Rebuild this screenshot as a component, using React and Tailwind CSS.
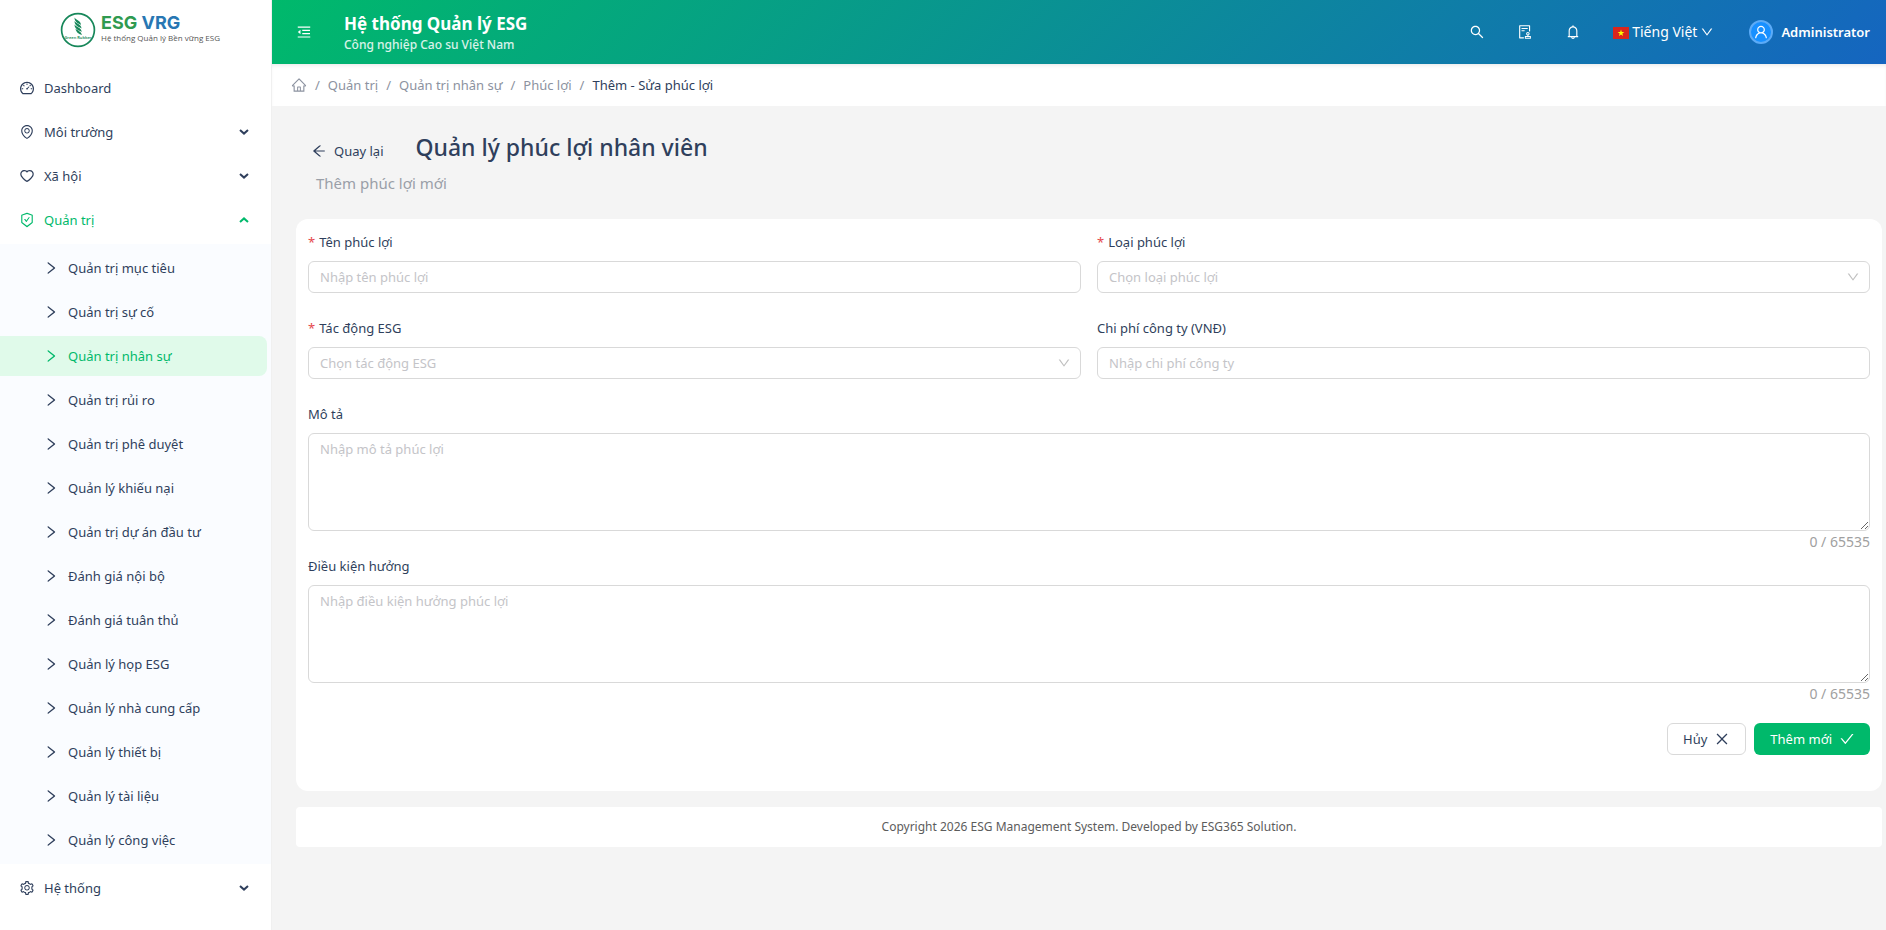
import {
  AiOutlineArrowLeft,
  AiOutlineAudit,
  AiOutlineBell,
  AiOutlineCheck,
  AiOutlineClose,
  AiOutlineDashboard,
  AiOutlineDown,
  AiOutlineEnvironment,
  AiOutlineHeart,
  AiOutlineHome,
  AiOutlineMenuFold,
  AiOutlineRight,
  AiOutlineSafetyCertificate,
  AiOutlineSearch,
  AiOutlineSetting,
  AiOutlineUser,
} from 'react-icons/ai'

const governanceItems = [
  'Quản trị mục tiêu',
  'Quản trị sự cố',
  'Quản trị nhân sự',
  'Quản trị rủi ro',
  'Quản trị phê duyệt',
  'Quản lý khiếu nại',
  'Quản trị dự án đầu tư',
  'Đánh giá nội bộ',
  'Đánh giá tuân thủ',
  'Quản lý họp ESG',
  'Quản lý nhà cung cấp',
  'Quản lý thiết bị',
  'Quản lý tài liệu',
  'Quản lý công việc',
]

const activeItem = 'Quản trị nhân sự'

function Caret({ open }) {
  return (
    <svg viewBox="0 0 10 6" className={`h-[6px] w-[10px] ${open ? 'rotate-180' : ''}`} fill="none">
      <path d="M1 1L5 4.600L9 1" stroke="currentColor" strokeWidth="2" />
    </svg>
  )
}

function Logo() {
  return (
    <a href="#home" className="flex h-16 items-start gap-[5px] pt-3 pl-[60px]">
      <svg viewBox="0 0 36 36" className="h-[36px] w-[36px] shrink-0" fill="none">
        <circle cx="18" cy="18" r="16.4" stroke="#17875a" strokeWidth="1.7" />
        <g fill="#17875a">
          <path d="M14.500 5.500c1 2.200 6.500 3.200 6.500 7.500-2.500-1.800-6.500-2.500-6.500-7.500z" />
          <path d="M14.500 9c1 2.200 7 3.200 7 7.500-2.500-1.800-7-2.500-7-7.500z" />
          <path d="M14.500 12.500c1 2.200 7.200 3.200 7.200 7.500-2.500-1.800-7.200-2.500-7.200-7.500z" />
          <path d="M15.500 16.500c1.500 2 5.500 2.400 6.500 6.500-3-1-6-2.500-6.500-6.500z" />
        </g>
        <text x="18" y="27" textAnchor="middle" fontSize="4" fontWeight="600" fill="#17875a">
          Green Rubber
        </text>
      </svg>
      <span className="flex flex-col whitespace-nowrap">
        <span className="font-['Inter',sans-serif] text-[18px] leading-[21px] font-bold">
          <span className="text-[#2f9a50]">ESG </span>
          <span className="text-[#2877b3]">VRG</span>
        </span>
        <span className="font-['Open_Sans',sans-serif] text-[8px] leading-[10px] text-[#555]">
          Hệ thống Quản lý Bền vững ESG
        </span>
      </span>
    </a>
  )
}

function MenuGroup({ icon: Icon, label, open, plain }) {
  return (
    <button
      type="button"
      className={`flex h-10 w-full items-center pr-[22px] pl-[19px] text-left ${open ? 'text-[#00b96b]' : ''}`}
    >
      <Icon className="h-4 w-4" />
      <span className="ml-[9px] flex-1">{label}</span>
      {!plain && <Caret open={open} />}
    </button>
  )
}

function MenuItem({ label }) {
  const active = label === activeItem

  return (
    <a
      href="#menu"
      aria-current={active ? 'page' : undefined}
      className={`mr-1 flex h-10 items-center gap-[9px] rounded-r-lg pl-[43px] ${
        active ? 'bg-[#e0faea] text-[#00b96b]' : ''
      }`}
    >
      <AiOutlineRight className="h-4 w-4" />
      {label}
    </a>
  )
}

function Sidebar() {
  return (
    <aside className="w-[272px] shrink-0 border-r border-[#f0f0f0] bg-white">
      <Logo />
      <nav className="flex flex-col gap-1 pt-1">
        <MenuGroup icon={AiOutlineDashboard} label="Dashboard" plain />
        <MenuGroup icon={AiOutlineEnvironment} label="Môi trường" />
        <MenuGroup icon={AiOutlineHeart} label="Xã hội" />
        <MenuGroup icon={AiOutlineSafetyCertificate} label="Quản trị" open />
        <div className="flex flex-col gap-1 bg-[#fafcff] py-1">
          {governanceItems.map((label) => (
            <MenuItem key={label} label={label} />
          ))}
        </div>
        <MenuGroup icon={AiOutlineSetting} label="Hệ thống" />
      </nav>
    </aside>
  )
}

function VietnamFlag() {
  return (
    <svg viewBox="0 0 16 12" className="mt-[2px] h-3 w-4">
      <path d="M0 0h16v12H0z" fill="#da251d" />
      <path d="M8 2.600l.8 2.500h2.600l-2.100 1.500.8 2.500L8 7.600 5.900 9.100l.8-2.500-2.100-1.500h2.600z" fill="#ff0" />
    </svg>
  )
}

function Header() {
  return (
    <header className="flex h-16 items-center bg-[linear-gradient(135deg,#00b96b_0%,#1565c0_100%)] pr-4 pl-6 text-white">
      <button type="button" aria-label="Thu gọn menu">
        <AiOutlineMenuFold className="h-4 w-4" />
      </button>
      <div className="ml-8 flex-1 pt-[2px]">
        <h1 className="text-[17px] leading-[24px] font-bold">Hệ thống Quản lý ESG</h1>
        <p className="text-[12px] leading-[18px] font-medium text-white/85">Công nghiệp Cao su Việt Nam</p>
      </div>
      <div className="flex items-center gap-8">
        <button type="button" aria-label="Tìm kiếm">
          <AiOutlineSearch className="h-4 w-4" />
        </button>
        <button type="button" aria-label="Phê duyệt">
          <AiOutlineAudit className="h-4 w-4" />
        </button>
        <button type="button" aria-label="Thông báo">
          <AiOutlineBell className="h-4 w-4" />
        </button>
        <button type="button" className="mr-[3px] flex items-center gap-[3px]">
          <VietnamFlag />
          <span className="text-[14px]">Tiếng Việt</span>
          <AiOutlineDown className="h-[14px] w-[14px]" />
        </button>
        <button type="button" className="flex items-center gap-2 font-semibold">
          <span className="flex h-6 w-6 items-center justify-center rounded-full border-2 border-[#5cabf7] bg-[#1890ff]">
            <AiOutlineUser className="h-4 w-4" />
          </span>
          Administrator
        </button>
      </div>
    </header>
  )
}

function Breadcrumb() {
  return (
    <nav
      aria-label="Breadcrumb"
      className="flex h-[42px] items-center gap-2 bg-white px-[19px] text-[#8c92a0] shadow-[inset_0_3px_4px_-2px_#0000001a]"
    >
      <a href="#home" aria-label="Trang chủ">
        <AiOutlineHome className="h-4 w-4" />
      </a>
      <span>/</span>
      <a href="#governance">Quản trị</a>
      <span>/</span>
      <a href="#hr">Quản trị nhân sự</a>
      <span>/</span>
      <a href="#benefits">Phúc lợi</a>
      <span>/</span>
      <span className="text-[#2f3f5c]">Thêm - Sửa phúc lợi</span>
    </nav>
  )
}

function Label({ id, required, children }) {
  return (
    <label htmlFor={id} className="mb-2 flex h-[22px] items-center gap-1">
      {required && <span className="text-[#e5484d]">*</span>}
      {children}
    </label>
  )
}

const control = 'block w-full rounded-md border border-[#d9d9d9] bg-white px-[11px] placeholder:text-[#c4c4c8]'

function TextField({ id, label, placeholder, required }) {
  return (
    <div>
      <Label id={id} required={required}>
        {label}
      </Label>
      <input id={id} type="text" placeholder={placeholder} className={`h-8 ${control}`} />
    </div>
  )
}

function SelectField({ id, label, placeholder, required }) {
  return (
    <div>
      <Label id={id} required={required}>
        {label}
      </Label>
      <div className="relative">
        <select id={id} defaultValue="" className={`h-8 appearance-none text-[#c4c4c8] ${control}`}>
          <option value="">{placeholder}</option>
        </select>
        <AiOutlineDown className="pointer-events-none absolute top-[9px] right-[10px] h-[14px] w-[14px] text-[#bfbfbf]" />
      </div>
    </div>
  )
}

function TextArea({ id, label, placeholder }) {
  return (
    <div>
      <Label id={id}>{label}</Label>
      <textarea id={id} maxLength={65535} placeholder={placeholder} className={`h-[98px] py-1 leading-[22px] ${control}`} />
      <p className="text-right text-[14px] leading-[22px] text-[#a0a0a0]">0 / 65535</p>
    </div>
  )
}

function BenefitForm() {
  return (
    <form className="rounded-xl bg-white px-3 pt-3 pb-9">
      <div className="mb-6 grid grid-cols-2 gap-x-4 gap-y-6">
        <TextField id="name" label="Tên phúc lợi" placeholder="Nhập tên phúc lợi" required />
        <SelectField id="type" label="Loại phúc lợi" placeholder="Chọn loại phúc lợi" required />
        <SelectField id="impact" label="Tác động ESG" placeholder="Chọn tác động ESG" required />
        <TextField id="cost" label="Chi phí công ty (VNĐ)" placeholder="Nhập chi phí công ty" />
      </div>
      <div className="flex flex-col gap-[2px]">
        <TextArea id="description" label="Mô tả" placeholder="Nhập mô tả phúc lợi" />
        <TextArea id="condition" label="Điều kiện hưởng" placeholder="Nhập điều kiện hưởng phúc lợi" />
      </div>
      <div className="mt-[18px] flex justify-end gap-2">
        <button type="button" className="flex h-8 items-center gap-[7px] rounded-md border border-[#d9d9d9] px-[15px]">
          Hủy
          <AiOutlineClose className="h-4 w-4" />
        </button>
        <button type="submit" className="flex h-8 items-center gap-[7px] rounded-md bg-[#00b96b] pr-[15px] pl-4 text-white">
          Thêm mới
          <AiOutlineCheck className="h-4 w-4" />
        </button>
      </div>
    </form>
  )
}

export default function App() {
  return (
    <div className="flex min-h-screen bg-[#f4f4f4] font-['Noto_Sans',sans-serif] text-[13px] leading-[22px] text-[#2f3f5c]">
      <Sidebar />
      <div className="flex min-w-0 flex-1 flex-col">
        <Header />
        <Breadcrumb />
        <main className="pt-[23px] pr-1 pl-6">
          <div className="flex items-start pl-[15px]">
            <a href="#back" className="flex items-center gap-[7px] pt-[11px]">
              <AiOutlineArrowLeft className="h-4 w-4" />
              Quay lại
            </a>
            <h2 className="ml-8 text-[23px] leading-[36px] font-medium">Quản lý phúc lợi nhân viên</h2>
          </div>
          <p className="mt-[6px] mb-6 pl-5 text-[15px] leading-[24px] text-[#9a9fa8]">Thêm phúc lợi mới</p>
          <BenefitForm />
          <footer className="mt-4 rounded bg-white py-2 text-center text-[12px] leading-[24px] text-[#5c5c5c]">
            Copyright 2026 ESG Management System. Developed by ESG365 Solution.
          </footer>
        </main>
      </div>
    </div>
  )
}
